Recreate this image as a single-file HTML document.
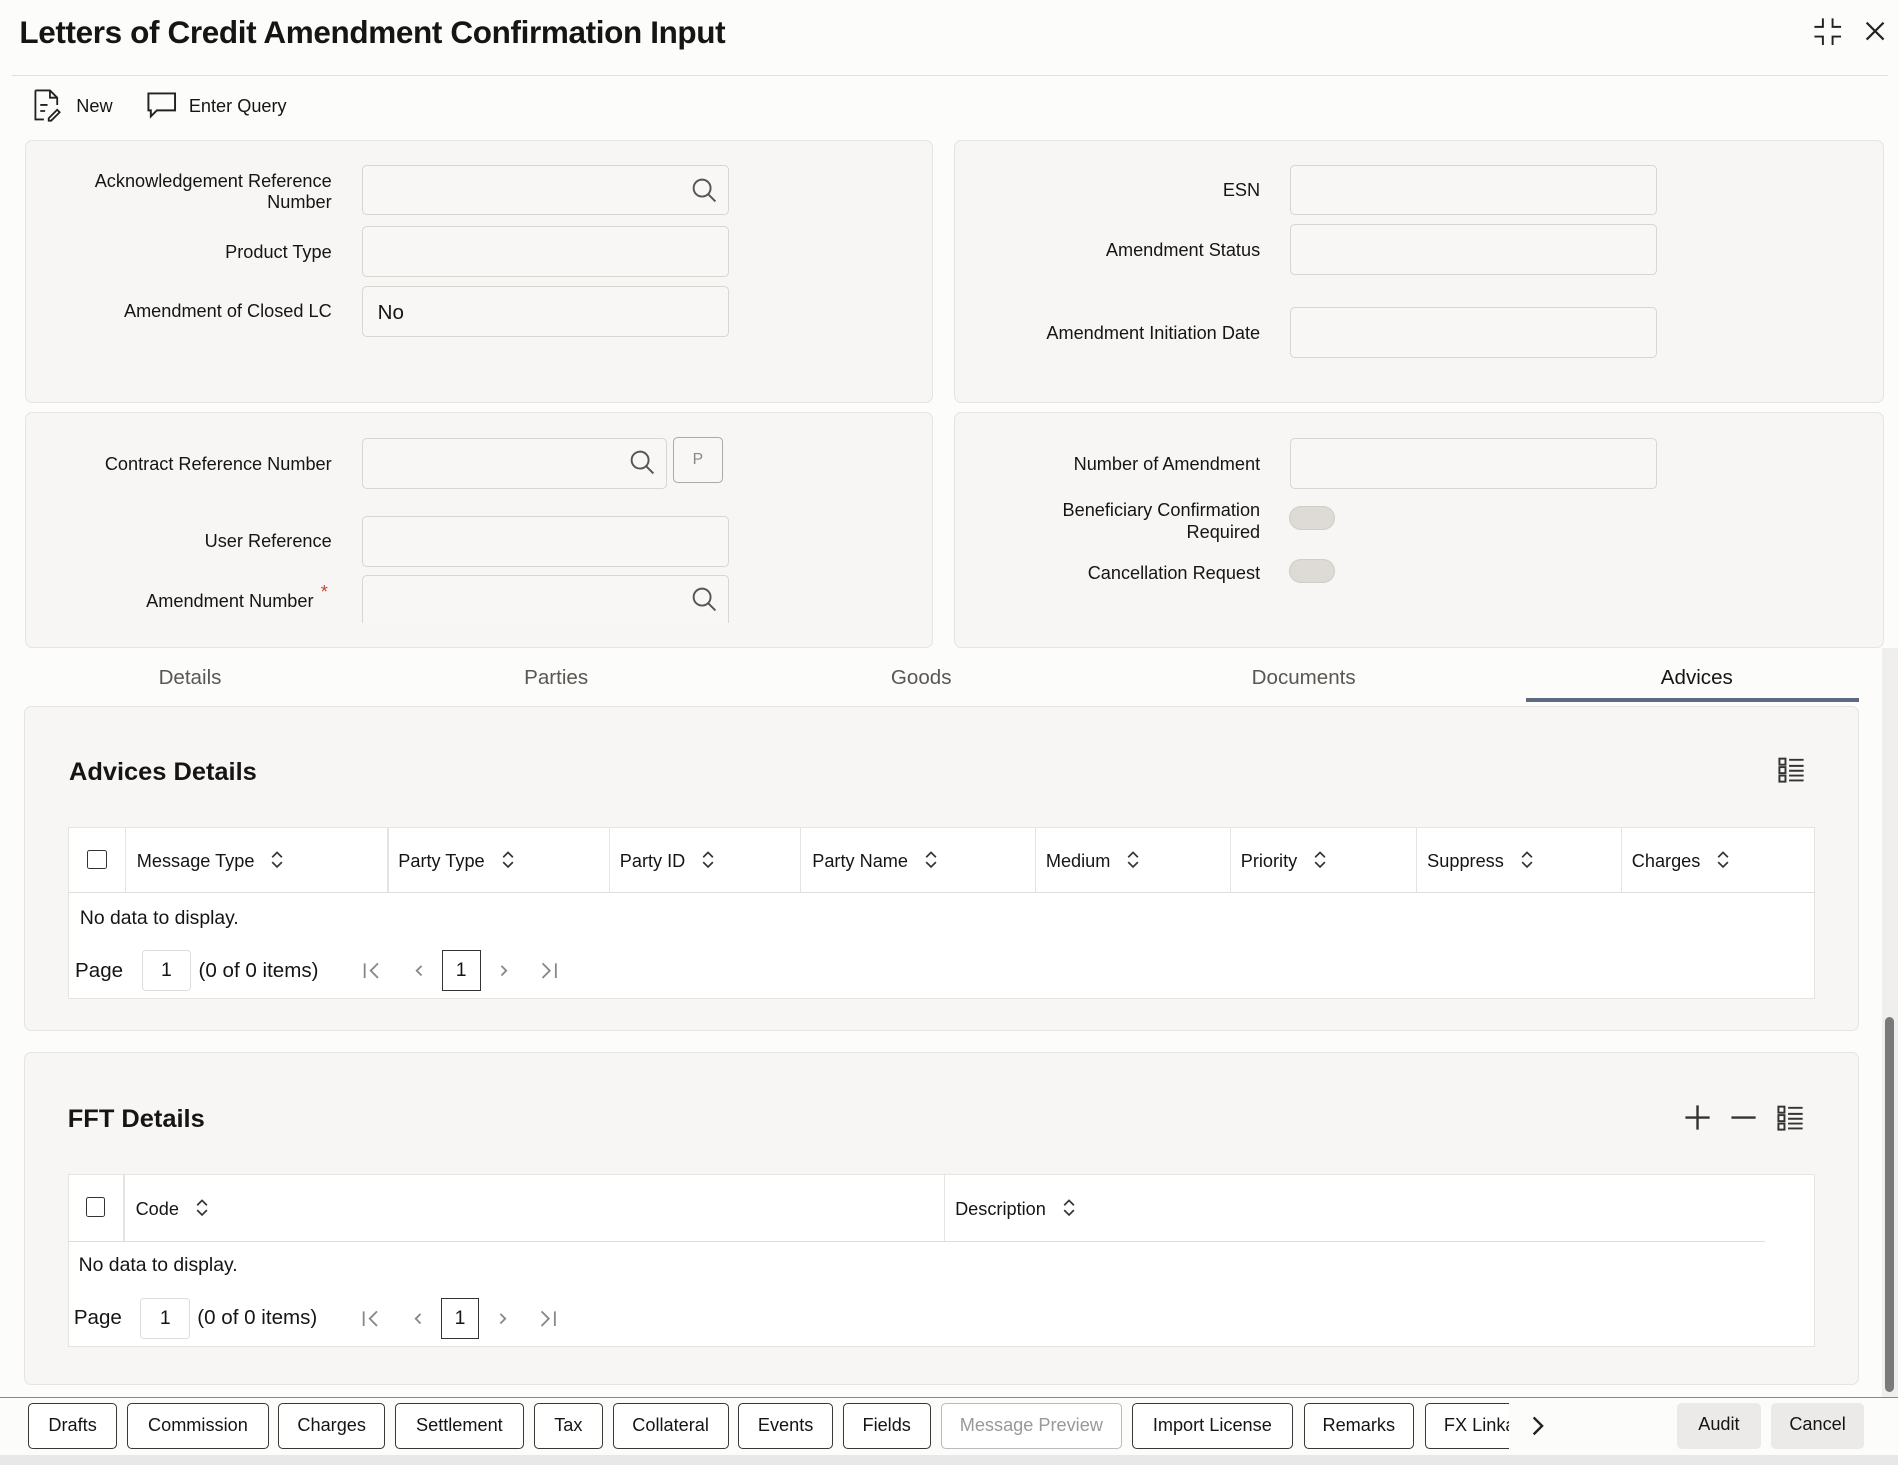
<!DOCTYPE html>
<html><head><meta charset="utf-8"><style>
*{box-sizing:border-box;margin:0;padding:0}
html,body{width:1898px;height:1465px;overflow:hidden;background:#fcfcfb}
#w{zoom:1.2105;width:1568px;height:1211px;position:relative;font-family:"Liberation Sans",sans-serif;color:#161513;font-size:15px}
.a{position:absolute}
.p{position:absolute;background:#f7f6f5;border:1px solid #e6e4e1;border-radius:6px}
.lb{position:absolute;text-align:right;font-size:15px;color:#161513;line-height:18px}
.in{position:absolute;background:#f8f7f6;border:1px solid #d9d6d2;border-radius:4px;height:42px;width:303px}
.tg{position:absolute;width:38px;height:20px;border-radius:10px;background:#dedbd7;border:1px solid #d0ccc7}
.tab{position:absolute;top:550px;font-size:17px;color:#5a5753}
.th{position:absolute;top:702px;font-size:15px}
.th svg{position:static;vertical-align:-2px;margin-left:14px}
.btn{position:absolute;top:1159px;height:38px;border:1px solid #3a3835;border-radius:4px;background:#fff;font-size:15px;line-height:36px;text-align:center}
.cb{position:absolute;width:16px;height:16px;border:1.5px solid #333;border-radius:2px;background:#fff}
svg{position:absolute}
</style></head><body><div id="w">
<div class="a" style="left:16px;top:12px;font-size:26px;font-weight:bold;letter-spacing:-0.3px">Letters of Credit Amendment Confirmation Input</div>
<div class="a" style="left:10px;top:62px;width:1550px;height:1px;background:#e2e0dd"></div>
<svg style="left:1497px;top:13px" width="26" height="26" viewBox="0 0 26 26" fill="none" stroke="#222" stroke-width="1.6"><path d="M9 2v7H2M17 2v7h7M9 24v-7H2M17 24v-7h7"/></svg>
<svg style="left:1539px;top:16px" width="20" height="20" viewBox="0 0 20 20" stroke="#222" stroke-width="1.8"><path d="M3 3l14 14M17 3L3 17"/></svg>
<svg style="left:27px;top:73px" width="24" height="28" viewBox="0 0 24 28" fill="none" stroke="#222" stroke-width="1.5"><path d="M2 2h12l6 6v6M14 2v6h6M2 2v24h7M6 14h6M6 19h4M13 25l7-7 2 2-7 7h-2z"/></svg>
<div class="a" style="left:63px;top:79px">New</div>
<svg style="left:121px;top:75px" width="26" height="24" viewBox="0 0 26 24" fill="none" stroke="#222" stroke-width="1.6"><path d="M2 2h22v14H9l-5 5v-5H2z"/></svg>
<div class="a" style="left:156px;top:79px">Enter Query</div>

<div class="p" style="left:21px;top:116px;width:750px;height:217px"></div>
<div class="p" style="left:788px;top:116px;width:768px;height:217px"></div>
<div class="p" style="left:21px;top:340px;width:750px;height:195px"></div>
<div class="p" style="left:788px;top:340px;width:768px;height:195px"></div>

<div class="lb" style="right:1294px;top:141px">Acknowledgement Reference<br>Number</div>
<div class="in" style="left:299px;top:136px"></div>
<svg style="left:570px;top:145px" width="24" height="24" viewBox="0 0 24 24" fill="none" stroke="#555" stroke-width="1.6"><circle cx="10" cy="10" r="7"/><path d="M15 15l6 6"/></svg>
<div class="lb" style="right:1294px;top:200px">Product Type</div>
<div class="in" style="left:299px;top:187px"></div>
<div class="lb" style="right:1294px;top:249px">Amendment of Closed LC</div>
<div class="in" style="left:299px;top:236px"></div>
<div class="a" style="left:312px;top:249px;font-size:17px">No</div>

<div class="lb" style="right:527px;top:149px">ESN</div>
<div class="in" style="left:1066px;top:136px"></div>
<div class="lb" style="right:527px;top:198px">Amendment Status</div>
<div class="in" style="left:1066px;top:185px"></div>
<div class="lb" style="right:527px;top:267px">Amendment Initiation Date</div>
<div class="in" style="left:1066px;top:254px"></div>

<div class="lb" style="right:1294px;top:375px">Contract Reference Number</div>
<div class="in" style="left:299px;top:362px;width:252px"></div>
<svg style="left:519px;top:370px" width="24" height="24" viewBox="0 0 24 24" fill="none" stroke="#555" stroke-width="1.6"><circle cx="10" cy="10" r="7"/><path d="M15 15l6 6"/></svg>
<div class="a" style="left:556px;top:361px;width:41px;height:38px;border:1px solid #aaa;border-radius:4px;background:#f8f7f6;text-align:center;line-height:36px;font-size:13px;color:#888">P</div>
<div class="lb" style="right:1294px;top:439px">User Reference</div>
<div class="in" style="left:299px;top:426px"></div>
<div class="lb" style="right:1309px;top:488px">Amendment Number</div>
<div class="a" style="left:265px;top:481px;color:#c74634;font-size:15px">*</div>
<div class="in" style="left:299px;top:475px;height:40px;border-bottom:none;border-radius:4px 4px 0 0"></div>
<svg style="left:570px;top:483px" width="24" height="24" viewBox="0 0 24 24" fill="none" stroke="#555" stroke-width="1.6"><circle cx="10" cy="10" r="7"/><path d="M15 15l6 6"/></svg>

<div class="lb" style="right:527px;top:375px">Number of Amendment</div>
<div class="in" style="left:1066px;top:362px"></div>
<div class="lb" style="right:527px;top:413px">Beneficiary Confirmation<br>Required</div>
<div class="tg" style="left:1065px;top:418px"></div>
<div class="lb" style="right:527px;top:465px">Cancellation Request</div>
<div class="tg" style="left:1065px;top:462px"></div>

<div class="tab" style="left:131px">Details</div>
<div class="tab" style="left:433px">Parties</div>
<div class="tab" style="left:736px">Goods</div>
<div class="tab" style="left:1034px">Documents</div>
<div class="tab" style="left:1372px;color:#161513">Advices</div>
<div class="a" style="left:1261px;top:577px;width:275px;height:3px;background:#5f6a80"></div>

<div class="p" style="left:20px;top:583px;width:1516px;height:269px"></div>
<div class="a" style="left:57px;top:626px;font-size:21px;font-weight:bold">Advices Details</div>
<svg style="left:1468px;top:624px" width="24" height="24" viewBox="0 0 24 24" fill="none" stroke="#333" stroke-width="1.6"><rect x="2" y="3" width="5" height="5"/><rect x="2" y="10" width="5" height="5"/><rect x="2" y="17" width="5" height="5"/><path d="M10 4h12M10 9h12M10 13h12M10 17h12M10 21h12"/></svg>
<div class="a" style="left:56px;top:683px;width:1443px;height:142px;background:#fff;border:1px solid #e6e4e1"></div>
<div class="a" style="left:56px;top:737px;width:1443px;height:1px;background:#e0deda"></div>
<div class="cb" style="left:72px;top:702px"></div>
<div class="th" style="left:113px">Message Type<svg width="10" height="16" viewBox="0 0 10 16" fill="none" stroke="#333" stroke-width="1.4"><path d="M1 6l4-4 4 4M1 10l4 4 4-4"/></svg></div>
<div class="th" style="left:329px">Party Type<svg width="10" height="16" viewBox="0 0 10 16" fill="none" stroke="#333" stroke-width="1.4"><path d="M1 6l4-4 4 4M1 10l4 4 4-4"/></svg></div>
<div class="th" style="left:512px">Party ID<svg width="10" height="16" viewBox="0 0 10 16" fill="none" stroke="#333" stroke-width="1.4"><path d="M1 6l4-4 4 4M1 10l4 4 4-4"/></svg></div>
<div class="th" style="left:671px">Party Name<svg width="10" height="16" viewBox="0 0 10 16" fill="none" stroke="#333" stroke-width="1.4"><path d="M1 6l4-4 4 4M1 10l4 4 4-4"/></svg></div>
<div class="th" style="left:864px">Medium<svg width="10" height="16" viewBox="0 0 10 16" fill="none" stroke="#333" stroke-width="1.4"><path d="M1 6l4-4 4 4M1 10l4 4 4-4"/></svg></div>
<div class="th" style="left:1025px">Priority<svg width="10" height="16" viewBox="0 0 10 16" fill="none" stroke="#333" stroke-width="1.4"><path d="M1 6l4-4 4 4M1 10l4 4 4-4"/></svg></div>
<div class="th" style="left:1179px">Suppress<svg width="10" height="16" viewBox="0 0 10 16" fill="none" stroke="#333" stroke-width="1.4"><path d="M1 6l4-4 4 4M1 10l4 4 4-4"/></svg></div>
<div class="th" style="left:1348px">Charges<svg width="10" height="16" viewBox="0 0 10 16" fill="none" stroke="#333" stroke-width="1.4"><path d="M1 6l4-4 4 4M1 10l4 4 4-4"/></svg></div>
<div class="a" style="left:320px;top:683px;width:1px;height:54px;background:#e6e4e1"></div>
<div class="a" style="left:503px;top:683px;width:1px;height:54px;background:#e6e4e1"></div>
<div class="a" style="left:661px;top:683px;width:1px;height:54px;background:#e6e4e1"></div>
<div class="a" style="left:855px;top:683px;width:1px;height:54px;background:#e6e4e1"></div>
<div class="a" style="left:1016px;top:683px;width:1px;height:54px;background:#e6e4e1"></div>
<div class="a" style="left:1170px;top:683px;width:1px;height:54px;background:#e6e4e1"></div>
<div class="a" style="left:1339px;top:683px;width:1px;height:54px;background:#e6e4e1"></div>
<div class="a" style="left:103px;top:683px;width:1px;height:54px;background:#e6e4e1"></div>
<div class="a" style="left:66px;top:749px;font-size:16px">No data to display.</div>
<div class="a" style="left:62px;top:792px;font-size:17px">Page</div>
<div class="a" style="left:117px;top:785px;width:41px;height:34px;border:1px solid #ddd;border-radius:3px;text-align:center;line-height:32px;font-size:16px">1</div>
<div class="a" style="left:164px;top:792px;font-size:17px">(0 of 0 items)</div>
<svg style="left:298px;top:794px" width="170" height="16" viewBox="0 0 170 16" fill="none" stroke="#888" stroke-width="1.5"><path d="M3 2v12M14 2L8 8l6 6M50 4l-4 4 4 4M116 4l4 4-4 4M150 2l6 6-6 6M161 2v12"/></svg>
<div class="a" style="left:365px;top:785px;width:32px;height:34px;border:1px solid #333;text-align:center;line-height:32px;font-size:16px">1</div>

<div class="p" style="left:20px;top:869px;width:1516px;height:275px"></div>
<div class="a" style="left:56px;top:913px;font-size:21px;font-weight:bold">FFT Details</div>
<svg style="left:1390px;top:911px" width="24" height="24" viewBox="0 0 24 24" stroke="#333" stroke-width="2"><path d="M12 2v20M2 12h20"/></svg>
<svg style="left:1428px;top:911px" width="24" height="24" viewBox="0 0 24 24" stroke="#333" stroke-width="2"><path d="M2 12h20"/></svg>
<svg style="left:1467px;top:911px" width="24" height="24" viewBox="0 0 24 24" fill="none" stroke="#333" stroke-width="1.6"><rect x="2" y="3" width="5" height="5"/><rect x="2" y="10" width="5" height="5"/><rect x="2" y="17" width="5" height="5"/><path d="M10 4h12M10 9h12M10 13h12M10 17h12M10 21h12"/></svg>
<div class="a" style="left:56px;top:970px;width:1443px;height:143px;background:#fff;border:1px solid #e6e4e1"></div>
<div class="a" style="left:56px;top:1025px;width:1402px;height:1px;background:#e0deda"></div>
<div class="a" style="left:102px;top:970px;width:1px;height:55px;background:#e6e4e1"></div>
<div class="a" style="left:780px;top:970px;width:1px;height:55px;background:#e6e4e1"></div>
<div class="cb" style="left:71px;top:989px"></div>
<div class="th" style="left:112px;top:990px">Code<svg width="10" height="16" viewBox="0 0 10 16" fill="none" stroke="#333" stroke-width="1.4"><path d="M1 6l4-4 4 4M1 10l4 4 4-4"/></svg></div>
<div class="th" style="left:789px;top:990px">Description<svg width="10" height="16" viewBox="0 0 10 16" fill="none" stroke="#333" stroke-width="1.4"><path d="M1 6l4-4 4 4M1 10l4 4 4-4"/></svg></div>
<div class="a" style="left:65px;top:1036px;font-size:16px">No data to display.</div>
<div class="a" style="left:61px;top:1079px;font-size:17px">Page</div>
<div class="a" style="left:116px;top:1072px;width:41px;height:34px;border:1px solid #ddd;border-radius:3px;text-align:center;line-height:32px;font-size:16px">1</div>
<div class="a" style="left:163px;top:1079px;font-size:17px">(0 of 0 items)</div>
<svg style="left:297px;top:1081px" width="170" height="16" viewBox="0 0 170 16" fill="none" stroke="#888" stroke-width="1.5"><path d="M3 2v12M14 2L8 8l6 6M50 4l-4 4 4 4M116 4l4 4-4 4M150 2l6 6-6 6M161 2v12"/></svg>
<div class="a" style="left:364px;top:1072px;width:32px;height:34px;border:1px solid #333;text-align:center;line-height:32px;font-size:16px">1</div>

<div class="a" style="left:1555px;top:535px;width:13px;height:620px;background:#f0efee"></div>
<div class="a" style="left:1557px;top:840px;width:8px;height:310px;background:#7a7a7a;border-radius:4px"></div>

<div class="a" style="left:0;top:1154px;width:1568px;height:1px;background:#888"></div>
<div class="a" style="left:0;top:1202px;width:1568px;height:9px;background:#e8e8e8"></div>
<div class="btn" style="left:23px;width:74px">Drafts</div>
<div class="btn" style="left:105px;width:117px">Commission</div>
<div class="btn" style="left:230px;width:88px">Charges</div>
<div class="btn" style="left:326px;width:107px">Settlement</div>
<div class="btn" style="left:441px;width:57px">Tax</div>
<div class="btn" style="left:506px;width:96px">Collateral</div>
<div class="btn" style="left:610px;width:78px">Events</div>
<div class="btn" style="left:696px;width:73px">Fields</div>
<div class="btn" style="left:777px;width:150px;border-color:#bbb;color:#999">Message Preview</div>
<div class="btn" style="left:935px;width:133px">Import License</div>
<div class="btn" style="left:1077px;width:91px">Remarks</div>
<div class="btn" style="left:1177px;width:80px;border-right:none;text-align:left;padding-left:15px;overflow:hidden;white-space:nowrap">FX Linkage</div>
<div class="a" style="left:1247px;top:1155px;width:12px;height:46px;background:#fcfcfb"></div>
<svg style="left:1264px;top:1169px" width="12" height="18" viewBox="0 0 12 18" fill="none" stroke="#222" stroke-width="2"><path d="M3 2l7 7-7 7"/></svg>
<div class="btn" style="left:1385px;width:70px;background:#ebeae8;border:none">Audit</div>
<div class="btn" style="left:1463px;width:77px;background:#ebeae8;border:none">Cancel</div>
</div></body></html>
